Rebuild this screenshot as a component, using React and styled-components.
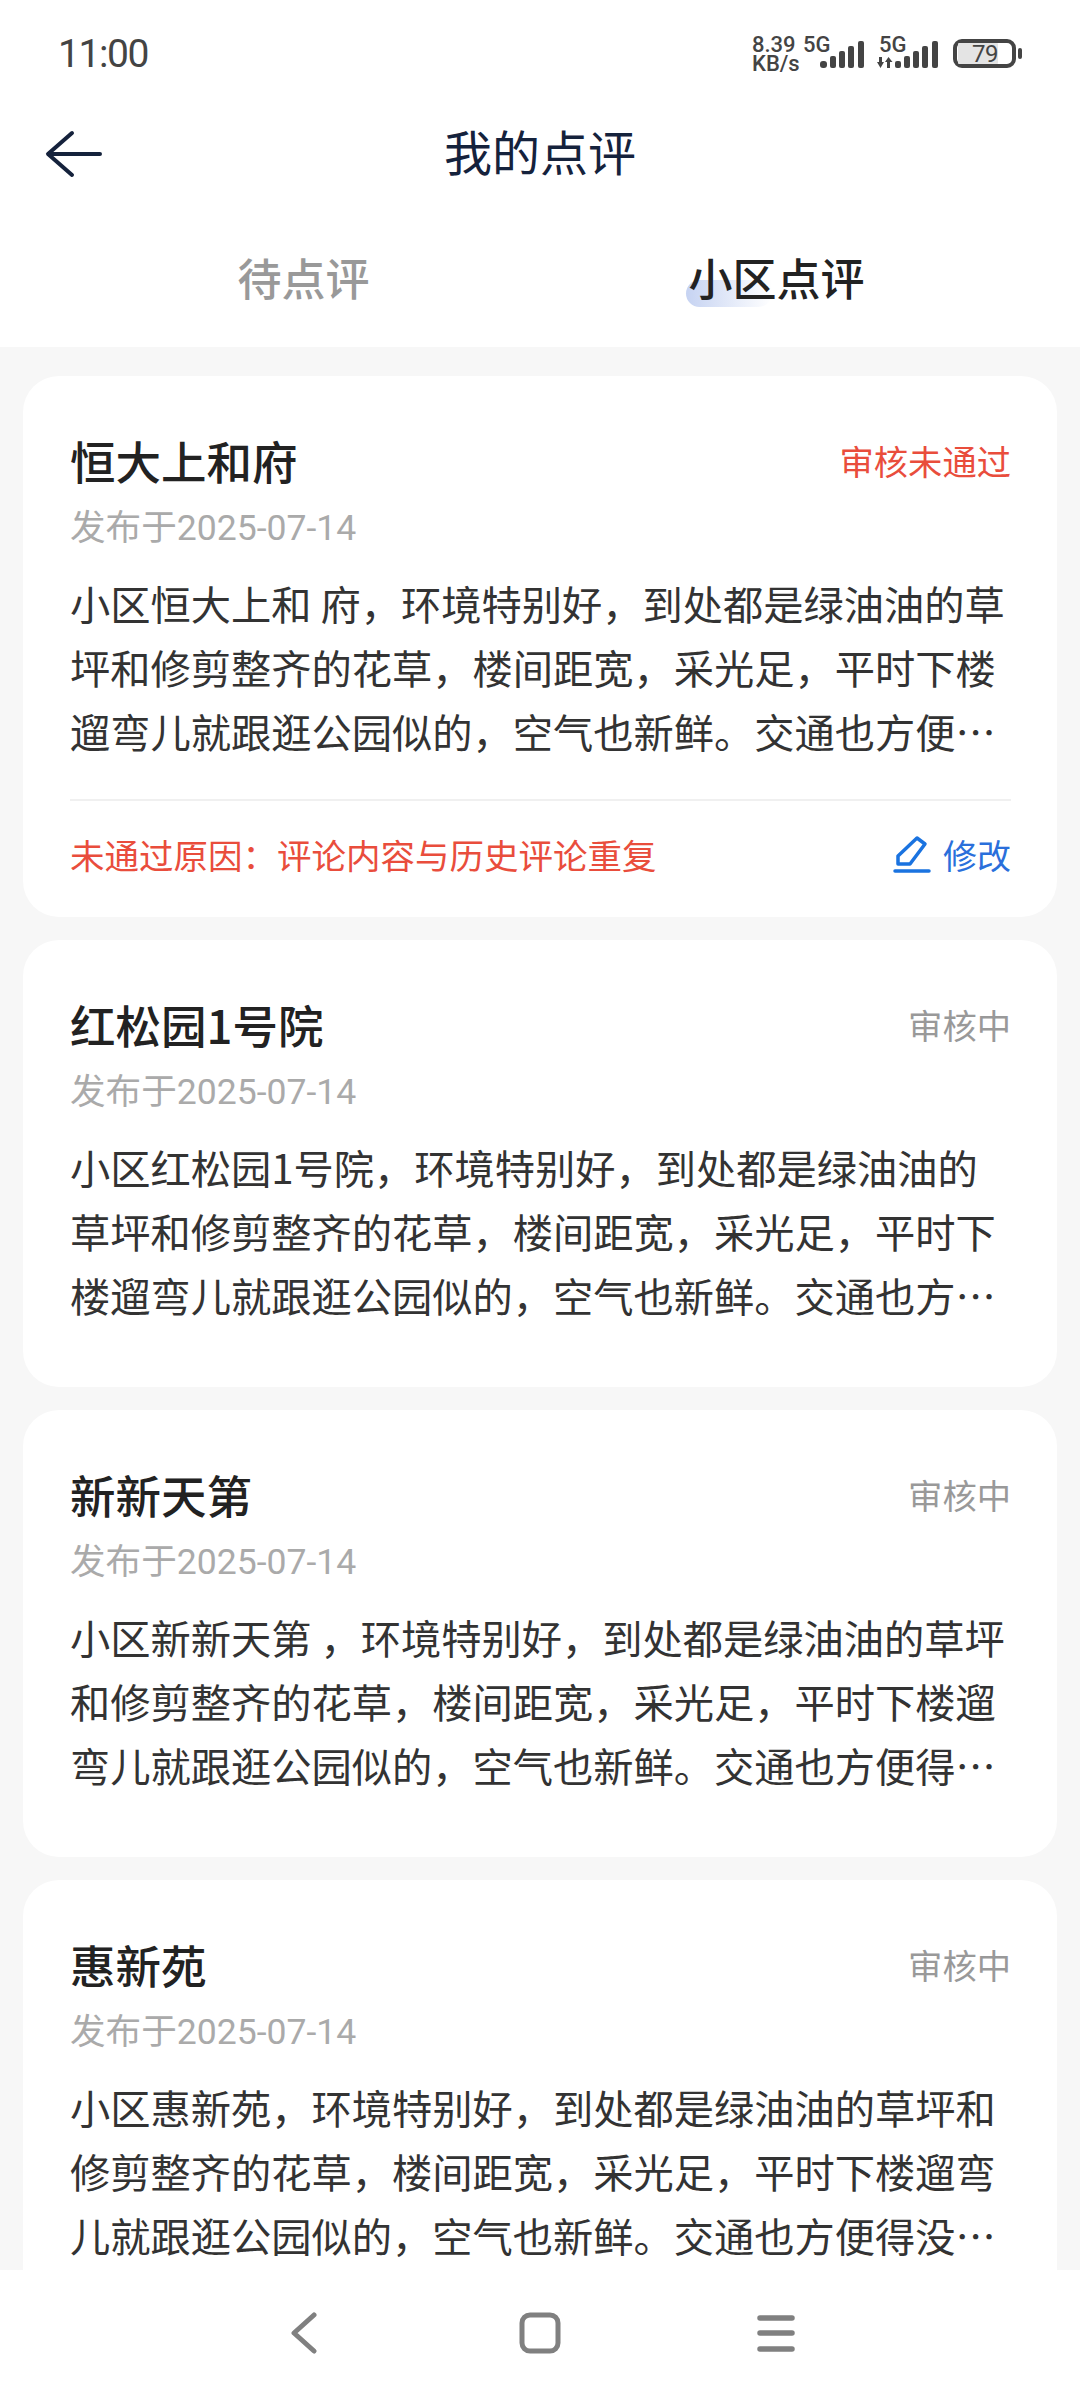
import React from 'react';
import styled, { createGlobalStyle } from 'styled-components';

const GlobalStyle = createGlobalStyle`
  html, body {
    margin: 0;
    padding: 0;
    background: #f7f7f7;
    font-family: "Noto Sans CJK SC", "Noto Sans", sans-serif;
  }
`;

const Page = styled.div`
  width: 1080px;
  height: 2400px;
  display: flex;
  flex-direction: column;
  overflow: hidden;
  background: #f7f7f7;
`;

const Top = styled.header`
  flex: none;
  height: 347px;
  background: #fff;
`;

const StatusBar = styled.div`
  height: 104px;
  padding: 0 58px;
  display: flex;
  align-items: center;
  justify-content: space-between;
  color: #444;
`;

const Time = styled.span`
  font-family: Roboto, sans-serif;
  font-size: 39px;
  letter-spacing: -1.4px;
  margin-top: 3px;
`;

const StatusIcons = styled.div`
  display: flex;
  align-items: flex-start;
  height: 32px;
  margin-top: 2px;
`;

const Speed = styled.div`
  width: 51px;
  margin-top: -2px;
  display: flex;
  flex-direction: column;
  font-family: Roboto, sans-serif;
  font-weight: 500;
  font-size: 22px;
  line-height: 19px;
`;

const Net = styled.span`
  width: 27px;
  margin: -2px 0 0 ${(p) => p.$left}px;
  font-family: Roboto, sans-serif;
  font-weight: 500;
  font-size: 22px;
  line-height: 19px;
`;

const Signal = styled.svg`
  display: block;
  flex: none;
  margin: 4px 0 0 ${(p) => p.$left}px;
`;

const Battery = styled.div`
  position: relative;
  box-sizing: border-box;
  width: 63px;
  height: 29px;
  margin: 2px 6px 0 15px;
  padding: 0 1px;
  border: 4px solid #444;
  border-radius: 9px;

  &::after {
    content: '';
    position: absolute;
    right: -10px;
    top: 5px;
    width: 4px;
    height: 11px;
    border-radius: 2px;
    background: #444;
  }
`;

const BatteryFill = styled.div`
  width: 40px;
  height: 100%;
  position: relative;
  background: #e4e4e4;
  border-radius: 1px;
`;

const BatteryText = styled.span`
  position: absolute;
  left: 14px;
  top: 1px;
  font-family: Roboto, sans-serif;
  font-size: 24px;
  line-height: 21px;
  letter-spacing: -0.5px;
  color: #444;
`;

const NavRow = styled.div`
  position: relative;
  box-sizing: border-box;
  height: 100px;
  padding-bottom: 8px;
  display: flex;
  align-items: center;
  justify-content: center;
`;

const BackIcon = styled.svg`
  position: absolute;
  left: 45px;
  top: 26px;
`;

const PageTitle = styled.h1`
  margin: 0;
  font-size: 48px;
  font-weight: 400;
  color: #15223c;
`;

const Tabs = styled.div`
  display: grid;
  grid-template-columns: 1fr 1fr;
  padding: 0 67px;
  margin-top: 47px;
`;

const Tab = styled.div`
  justify-self: center;
  position: relative;
  font-size: 44px;
  line-height: 52px;
  font-weight: 500;
  color: ${(p) => (p.$active ? '#222' : '#999')};

  ${(p) =>
    p.$active &&
    `
    &::before {
      content: '';
      position: absolute;
      left: -3px;
      top: 29px;
      width: 86px;
      height: 27px;
      border-radius: 14px 0 14px 14px;
      background: linear-gradient(90deg, #c6d3f2, rgba(230, 236, 250, 0));
    }
  `}
`;

const TabLabel = styled.span`
  position: relative;
`;

const List = styled.main`
  flex: 1;
  min-height: 0;
  overflow: hidden;
  padding: 29px 23px 0;
  display: flex;
  flex-direction: column;
  gap: 23px;
`;

const Card = styled.article`
  flex: none;
  background: #fff;
  border-radius: 36px;
  padding: 55px 46px 60px 47px;
`;

const CardHead = styled.div`
  display: flex;
  justify-content: space-between;
  align-items: center;
  height: 58px;
`;

const Name = styled.h2`
  margin: 0;
  font-size: 45.5px;
  font-weight: 500;
  color: #222;
`;

const Status = styled.span`
  font-size: 34.3px;
  color: ${(p) => (p.$failed ? '#e94d3c' : '#999')};
`;

const Dates = styled.div`
  margin-top: 14px;
  font-family: Roboto, "Noto Sans CJK SC", sans-serif;
  font-size: 35.6px;
  line-height: 50px;
  color: #aaa;
`;

const Body = styled.p`
  margin: 18px 0 0;
  font-size: 40.25px;
  line-height: 64px;
  color: #333;
  display: -webkit-box;
  -webkit-box-orient: vertical;
  -webkit-line-clamp: 3;
  overflow: hidden;
`;

const Foot = styled.div`
  margin-top: 36px;
  margin-bottom: -50px;
  border-top: 2px solid #f0f0f0;
  height: 106px;
  display: flex;
  align-items: center;
  justify-content: space-between;
`;

const Reason = styled.span`
  font-size: 34.5px;
  color: #e94d3c;
`;

const Edit = styled.span`
  display: flex;
  align-items: center;
  gap: 12px;
  font-size: 34px;
  color: #2a6fdb;
`;

const BottomNav = styled.nav`
  flex: none;
  height: 130px;
  background: #fff;
  display: grid;
  grid-template-columns: repeat(3, 236px);
  justify-content: center;
  justify-items: center;
  padding-top: 42px;
  box-sizing: border-box;
`;

const reviews = [
  {
    name: '恒大上和府',
    status: '审核未通过',
    failed: true,
    text: '小区恒大上和 府，环境特别好，到处都是绿油油的草坪和修剪整齐的花草，楼间距宽，采光足，平时下楼遛弯儿就跟逛公园似的，空气也新鲜。交通也方便得没话说，出门就有地铁和公交。',
    reason: '未通过原因：评论内容与历史评论重复',
  },
  {
    name: '红松园1号院',
    status: '审核中',
    text: '小区红松园1号院，环境特别好，到处都是绿油油的草坪和修剪整齐的花草，楼间距宽，采光足，平时下楼遛弯儿就跟逛公园似的，空气也新鲜。交通也方便得没话说，出门就有地铁和公交。',
  },
  {
    name: '新新天第',
    status: '审核中',
    text: '小区新新天第 ，环境特别好，到处都是绿油油的草坪和修剪整齐的花草，楼间距宽，采光足，平时下楼遛弯儿就跟逛公园似的，空气也新鲜。交通也方便得没话说，出门就有地铁和公交。',
  },
  {
    name: '惠新苑',
    status: '审核中',
    text: '小区惠新苑，环境特别好，到处都是绿油油的草坪和修剪整齐的花草，楼间距宽，采光足，平时下楼遛弯儿就跟逛公园似的，空气也新鲜。交通也方便得没话说，出门就有地铁和公交。',
  },
];

const StatusRight = () => (
  <StatusIcons>
    <Speed>
      <span>8.39</span>
      <span>KB/s</span>
    </Speed>
    <Net $left={0}>5G</Net>
    <Signal width="44" height="27" viewBox="0 0 44 27" fill="#444" $left={-10}>
      <rect x="0" y="20" width="7" height="7" rx="3" />
      <rect x="10" y="15" width="6" height="12" rx="2" />
      <rect x="19" y="10" width="6" height="17" rx="2" />
      <rect x="28" y="5" width="6" height="22" rx="2" />
      <rect x="38" y="0" width="6" height="27" rx="2" />
    </Signal>
    <Net $left={15}>5G</Net>
    <Signal width="61" height="27" viewBox="0 0 61 27" fill="#444" $left={-29}>
      <path d="M2 16h3v5h2l-3.5 6L0 21h2zM11.5 16l4 5h-2.5v6h-3v-6H8z" />
      <rect x="18" y="20" width="6" height="7" rx="2" />
      <rect x="27" y="15" width="6" height="12" rx="2" />
      <rect x="36" y="10" width="6" height="17" rx="2" />
      <rect x="45" y="5" width="6" height="22" rx="2" />
      <rect x="55" y="0" width="6" height="27" rx="2" />
    </Signal>
    <Battery>
      <BatteryFill>
        <BatteryText>79</BatteryText>
      </BatteryFill>
    </Battery>
  </StatusIcons>
);

const App = () => (
  <Page>
    <GlobalStyle />
    <Top>
      <StatusBar>
        <Time>11:00</Time>
        <StatusRight />
      </StatusBar>
      <NavRow>
        <BackIcon width="58" height="48" viewBox="0 0 58 48" fill="none" stroke="#15223c" strokeWidth="4" strokeLinecap="round" strokeLinejoin="round">
          <path d="M55 24H4M27 3L3 24l24 21" />
        </BackIcon>
        <PageTitle>我的点评</PageTitle>
      </NavRow>
      <Tabs>
        <Tab>待点评</Tab>
        <Tab $active>
          <TabLabel>小区点评</TabLabel>
        </Tab>
      </Tabs>
    </Top>
    <List>
      {reviews.map((r) => (
        <Card key={r.name}>
          <CardHead>
            <Name>{r.name}</Name>
            <Status $failed={r.failed}>{r.status}</Status>
          </CardHead>
          <Dates>发布于2025-07-14</Dates>
          <Body>{r.text}</Body>
          {r.reason && (
            <Foot>
              <Reason>{r.reason}</Reason>
              <Edit>
                <svg width="38" height="38" viewBox="0 0 38 38" fill="none" stroke="#1a73e0" strokeWidth="3.5" strokeLinecap="round" strokeLinejoin="round">
                  <path d="M24 3l8 6-15 20H5V21z" />
                  <path d="M2 36h34" />
                </svg>
                修改
              </Edit>
            </Foot>
          )}
        </Card>
      ))}
    </List>
    <BottomNav>
      <svg width="26" height="42" viewBox="0 0 26 42" fill="none" stroke="#808080" strokeWidth="5" strokeLinecap="round" strokeLinejoin="round">
        <path d="M23 3L3 21l20 18" />
      </svg>
      <svg width="42" height="42" viewBox="0 0 42 42" fill="none" stroke="#808080" strokeWidth="5">
        <rect x="3" y="3" width="36" height="36" rx="8" />
      </svg>
      <svg width="38" height="42" viewBox="0 0 38 42" fill="none" stroke="#808080" strokeWidth="5.5" strokeLinecap="round">
        <path d="M3 6h32M3 21h32M3 37h32" />
      </svg>
    </BottomNav>
  </Page>
);

export default App;
